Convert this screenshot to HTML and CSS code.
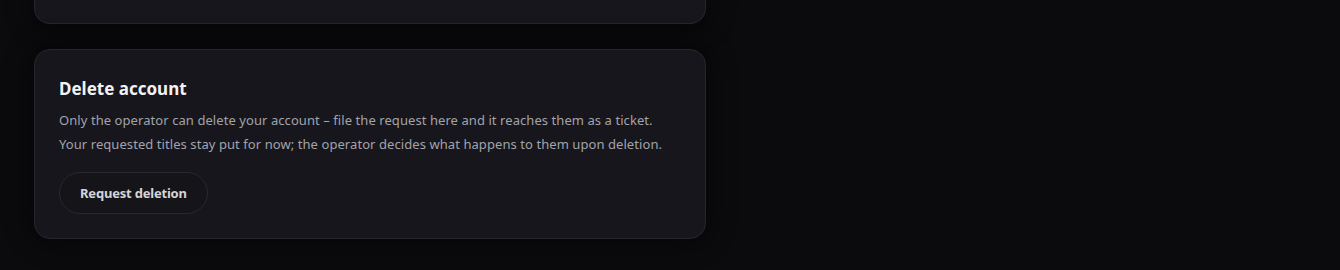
FILE: index.html
```html
<!DOCTYPE html>
<html lang="en">
<head>
<meta charset="utf-8">
<link rel="stylesheet" href="styles.css">
</head>
<body>
<main class="stack">
  <section class="card card-prev"></section>
  <section class="card">
    <h2 class="card-title">Delete account</h2>
    <p class="card-text">Only the operator can delete your account – file the request here and it reaches them as a ticket.<br>Your requested titles stay put for now; the operator decides what happens to them upon deletion.</p>
    <button class="btn" type="button">Request deletion</button>
  </section>
</main>
</body>
</html>
```
FILE: styles.css
```css
html, body {
  margin: 0;
  padding: 0;
  background: #0b0b0e;
  height: 100%;
}
body {
  font-family: "Noto Sans", "Open Sans", sans-serif;
  color: #e6e6ea;
}
.stack {
  width: 672px;
  margin-left: 34px;
  display: flex;
  flex-direction: column;
  gap: 25px;
}
.card {
  box-sizing: border-box;
  background: #16161c;
  border: 1px solid #26262d;
  border-radius: 16px;
  padding: 26px 24px 24px 24px;
  box-shadow: 0 0 24px 6px rgba(0, 0, 0, 0.45);
}
.card-prev {
  height: 24px;
  padding: 0;
  border-top: none;
  border-radius: 0 0 16px 16px;
}
.card-title {
  margin: 0;
  font-size: 17px;
  font-weight: 700;
  line-height: 26px;
  color: #f2f2f5;
}
.card-text {
  margin: 6px 0 0 0;
  font-size: 13px;
  line-height: 24px;
  letter-spacing: 0.07px;
  color: #a3a3ab;
}
.btn {
  margin-top: 16px;
  font-family: inherit;
  font-size: 13px;
  font-weight: 700;
  letter-spacing: -0.2px;
  color: #d4d4da;
  background: #141419;
  border: 1px solid #28282f;
  border-radius: 999px;
  height: 42px;
  padding: 0 20px;
  cursor: pointer;
}
```
